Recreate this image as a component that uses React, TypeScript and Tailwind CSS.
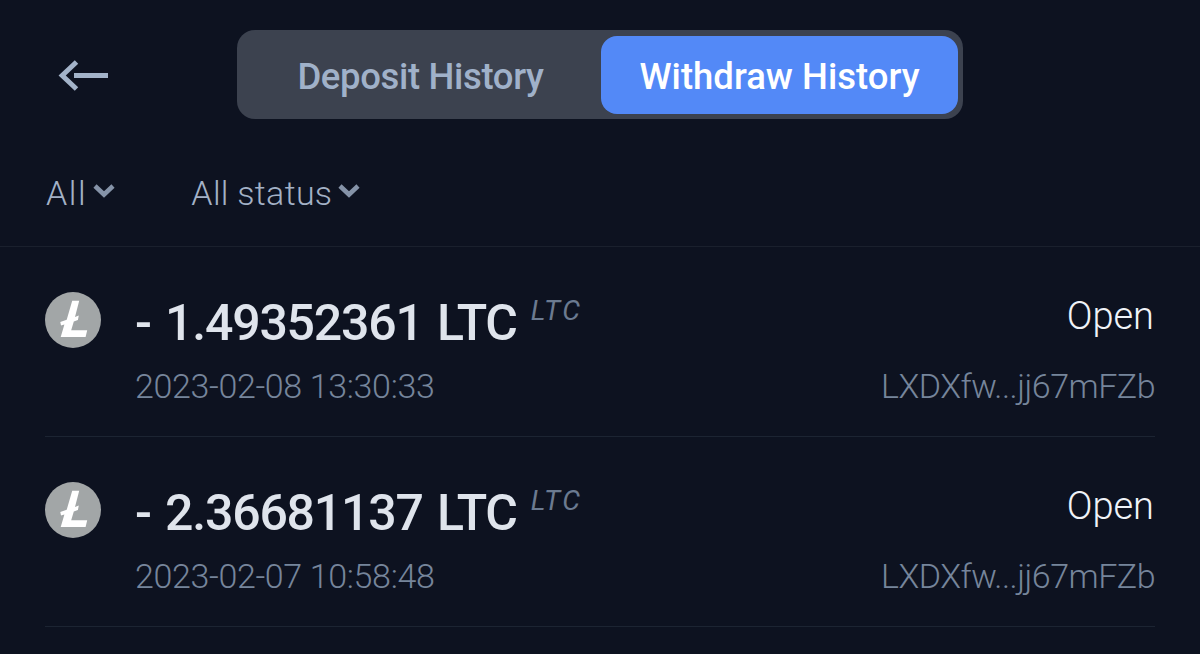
import React, { useState } from 'react';

interface Withdrawal {
    id: number;
    amount: string;
    coin: string;
    network: string;
    date: string;
    status: string;
    address: string;
}

const withdrawals: Withdrawal[] = [
    { id: 1, amount: '1.49352361', coin: 'LTC', network: 'LTC', date: '2023-02-08 13:30:33', status: 'Open', address: 'LXDXfw...jj67mFZb' },
    { id: 2, amount: '2.36681137', coin: 'LTC', network: 'LTC', date: '2023-02-07 10:58:48', status: 'Open', address: 'LXDXfw...jj67mFZb' },
];

const BackArrow = () => (
    <svg width="52" height="34" viewBox="0 0 52 34" fill="none" stroke="#a3b3c9" strokeWidth="5">
        <path d="M19.5 3 L5.2 16.5 L19.5 30" />
        <path d="M17 16.5 H51" />
    </svg>
);

const Chevron = () => (
    <svg className="-mt-[4px]" width="22" height="14" viewBox="0 0 22 14" fill="none" stroke="#8593a8" strokeWidth="4.6">
        <path d="M2 2 L11 10.5 L20 2" />
    </svg>
);

const LitecoinIcon = () => (
    <svg className="shrink-0" width="56" height="56" viewBox="0 0 56 56">
        <circle cx="28" cy="28" r="28" fill="#a2a6a7" />
        <path fill="#fff" d="M27.2 8.7 H34.2 L30 24.9 L33.8 23.6 L32.9 28 L28.8 29.4 L26.2 38.3 H42.2 L40.6 45 H15.7 L19.4 32.5 L16 33.4 L15.3 29.9 L21.7 27.7 Z" />
    </svg>
);

const WithdrawalRow = ({ item }: { item: Withdrawal }) => (
    <div className="flex h-[190px] border-b border-[#1c2432]">
        <div className="pt-[45px]">
            <LitecoinIcon />
        </div>
        <div className="ml-[34px] flex-1">
            <div className="flex items-start pt-[46px]">
                <span className="text-[50px] leading-[60px] font-medium tracking-[-1.2px] [word-spacing:3px] text-[#dfe4ec]">
                    - {item.amount} {item.coin}
                </span>
                <span className="-mt-[2px] ml-[14px] text-[28px] leading-[40px] tracking-[2.5px] italic text-[#6b7a90]">{item.network}</span>
            </div>
            <div className="mt-[13px] text-[34px] leading-[40px] font-light tracking-[-0.35px] text-[#76859b]">{item.date}</div>
        </div>
        <div className="pt-[39px] text-right">
            <div className="mr-[1px] text-[38px] leading-[60px] font-light text-[#f0f3f8]">{item.status}</div>
            <div className="mt-[20px] text-[34px] leading-[40px] font-light tracking-[-0.5px] text-[#76859b]">{item.address}</div>
        </div>
    </div>
);

export default function App() {
    const [tab, setTab] = useState<'deposit' | 'withdraw'>('withdraw');

    const tabBase = 'h-[78px] rounded-[16px] pt-[6px] text-[36.5px] font-medium whitespace-nowrap';
    const activeTab = 'bg-[#5389f7] text-white';
    const idleTab = 'text-[#a0b1c9]';

    return (
        <div className="h-[654px] w-[1200px] overflow-hidden bg-[#0d1220] font-['Roboto',sans-serif]">
            <div className="h-[247px] border-b border-[#1a202d]">
                <div className="flex items-start pt-[30px]">
                    <button className="mt-[29px] ml-[57px]">
                        <BackArrow />
                    </button>
                    <div className="ml-[128px] flex h-[89px] w-[726px] items-center rounded-[18px] bg-[#3c424f] px-[5px]">
                        <button onClick={() => setTab('deposit')} className={`w-[359px] pr-[2px] tracking-[-0.35px] ${tabBase} ${tab === 'deposit' ? activeTab : idleTab}`}>
                            Deposit History
                        </button>
                        <button onClick={() => setTab('withdraw')} className={`w-[357px] ${tabBase} ${tab === 'withdraw' ? activeTab : idleTab}`}>
                            Withdraw History
                        </button>
                    </div>
                </div>
                <div className="mt-[53px] flex pl-[46px] text-[34px] leading-[42px] font-light text-[#a3b1c6]">
                    <button className="flex items-center gap-[6px]">
                        <span className="tracking-[1.6px]">All</span>
                        <Chevron />
                    </button>
                    <button className="ml-[76px] flex items-center gap-[6px]">
                        <span className="tracking-[0.3px]">All status</span>
                        <Chevron />
                    </button>
                </div>
            </div>
            <div className="px-[45px]">
                {withdrawals.map((item) => (
                    <WithdrawalRow key={item.id} item={item} />
                ))}
            </div>
        </div>
    );
}
